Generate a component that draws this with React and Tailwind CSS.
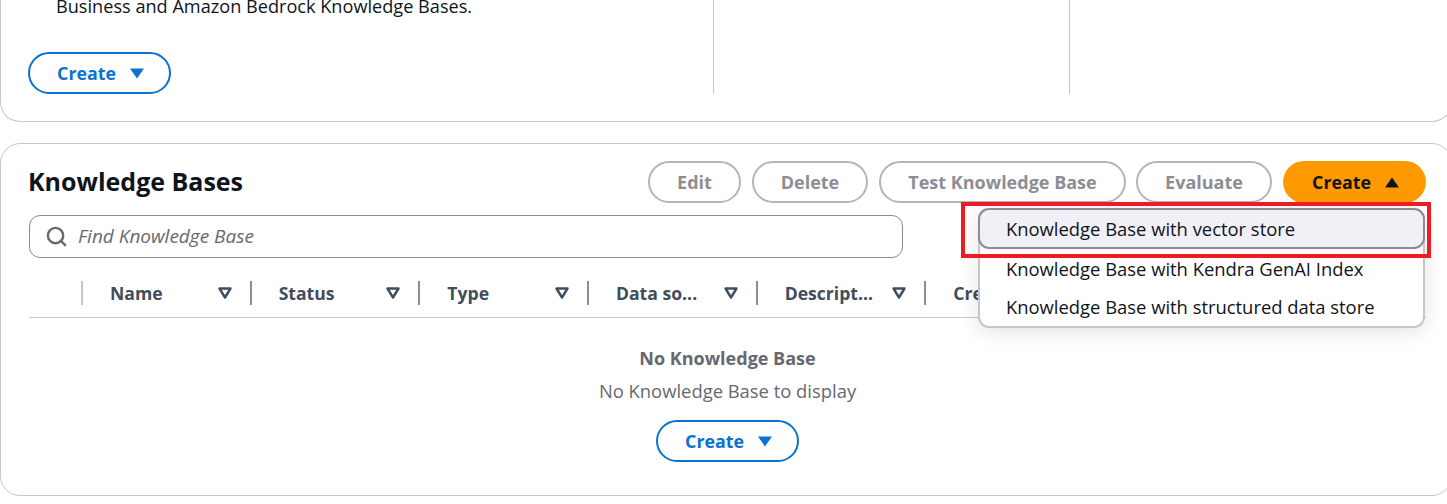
import { Search } from "lucide-react";

const font = { fontFamily: '"Open Sans", "Noto Sans", sans-serif' };

const columns = [
  { label: "Name", first: true },
  { label: "Status" },
  { label: "Type" },
  { label: "Data so..." },
  { label: "Descript..." },
  { label: "Created" },
];

function Caret({ up = false, className = "" }) {
  return (
    <svg width="14" height="11" viewBox="0 0 14 11" className={className}>
      <path d={up ? "M7 0.5 L14 10.5 H0 Z" : "M0 0.5 H14 L7 10.5 Z"} fill="currentColor" />
    </svg>
  );
}

function OutlineCaret() {
  return (
    <svg width="14" height="12" viewBox="0 0 14 12" className="shrink-0 text-[#414d5c]">
      <path d="M1.5 1.5 H12.5 L7 10.5 Z" fill="none" stroke="currentColor" strokeWidth="2.4" strokeLinejoin="round" />
    </svg>
  );
}

function CreateButton({ className = "" }) {
  return (
    <button
      type="button"
      className={`flex h-[42px] w-[143px] items-center justify-center gap-[14px] rounded-full border-2 border-[#0972d3] bg-white pl-[2px] text-[17.8px] font-bold text-[#0972d3] ${className}`}
    >
      Create
      <Caret />
    </button>
  );
}

function DisabledButton({ label, width }) {
  return (
    <button
      type="button"
      className={`flex h-[42px] items-center justify-center rounded-full border-2 border-[#b4b4bb] bg-white text-[18px] font-bold text-[#8d8d94] ${width}`}
    >
      {label}
    </button>
  );
}

export default function App() {
  return (
    <div className="relative h-[504px] w-[1447px] overflow-hidden bg-white text-[#0f141a]" style={font}>
      {/* TOP CARD */}
      <section className="flex h-[122px] w-[1452px] rounded-b-[20px] border-x border-b border-[#c6c6cd] pb-[27px]">
        <div className="w-[713px] shrink-0 border-r border-[#c6c6cd] pl-[27px]">
          <p className="-mt-[7px] whitespace-nowrap pl-[28px] text-[18.15px] leading-[26px]">
            Business and Amazon Bedrock Knowledge Bases.
          </p>
          <CreateButton className="mt-[33px]" />
        </div>
        <div className="w-[356px] shrink-0 border-r border-[#c6c6cd]" />
      </section>

      {/* KNOWLEDGE BASES CARD */}
      <section className="mt-[21px] h-[353px] w-[1452px] rounded-[20px] border border-[#c6c6cd] pl-[28px] pr-[25px] pt-[17px]">
        <div className="flex items-center justify-between">
          <h2 className="-ml-px -mt-[2px] text-[25px] font-bold leading-[42px]">Knowledge Bases</h2>
          <div className="flex gap-[11px]">
            <DisabledButton label="Edit" width="w-[93px]" />
            <DisabledButton label="Delete" width="w-[116px]" />
            <DisabledButton label="Test Knowledge Base" width="w-[247px]" />
            <DisabledButton label="Evaluate" width="-ml-px w-[136px]" />
            <button
              type="button"
              className="flex h-[42px] w-[143px] items-center justify-center gap-[14px] rounded-full bg-[#ff9900] pl-[2px] text-[17.8px] font-bold text-[#0f141a]"
            >
              Create
              <Caret up />
            </button>
          </div>
        </div>

        <div className="mt-[12px] flex h-[43px] w-[874px] items-center gap-[10px] rounded-[11px] border border-[#8c8c94] pl-[15px]">
          <Search size={23} strokeWidth={2.5} className="text-[#656871]" />
          <span className="text-[19px] italic text-[#656871]">Find Knowledge Base</span>
        </div>

        {/* TABLE HEADER */}
        <div className="mt-[23px] flex h-[37px] items-start overflow-hidden border-b border-[#c6c6cd]">
          <div className="h-[24px] w-[52px] shrink-0" />
          {columns.map((col) => (
            <div
              key={col.label}
              className={`flex h-[24px] w-[168.67px] shrink-0 items-center justify-between border-l-2 pl-[27px] pr-[18px] ${
                col.first ? "border-[#c6c6cd]" : "border-[#8c8c94]"
              }`}
            >
              <span className="text-[17.6px] font-bold text-[#414d5c]">{col.label}</span>
              <OutlineCaret />
            </div>
          ))}
        </div>

        {/* EMPTY STATE */}
        <div className="flex flex-col items-center pt-[27px] text-[#656871]">
          <p className="text-[18px] font-bold leading-[26px]">No Knowledge Base</p>
          <p className="mt-[7px] text-[18.4px] leading-[26px]">No Knowledge Base to display</p>
          <CreateButton className="mt-[16px]" />
        </div>
      </section>

      {/* DROPDOWN */}
      <div className="absolute left-[978px] top-[208px] w-[447px] rounded-[11px] border-2 border-t-0 border-[#c6c6cd] bg-white text-[18.4px] shadow-[0_4px_20px_1px_rgba(0,7,22,0.1)]">
        <div className="-mx-[2px] flex h-[41px] items-center rounded-[11px] border-2 border-[#8c8c94] bg-[#f0f0f6] pl-[26px]">
          Knowledge Base with vector store
        </div>
        <div className="flex h-[39px] items-center pl-[26px]">Knowledge Base with Kendra GenAI Index</div>
        <div className="flex h-[38px] items-center pl-[26px]">Knowledge Base with structured data store</div>
      </div>

      {/* RED HIGHLIGHT */}
      <div className="absolute left-[961px] top-[202px] h-[56px] w-[470px] border-4 border-[#ed1c24]" />
    </div>
  );
}
